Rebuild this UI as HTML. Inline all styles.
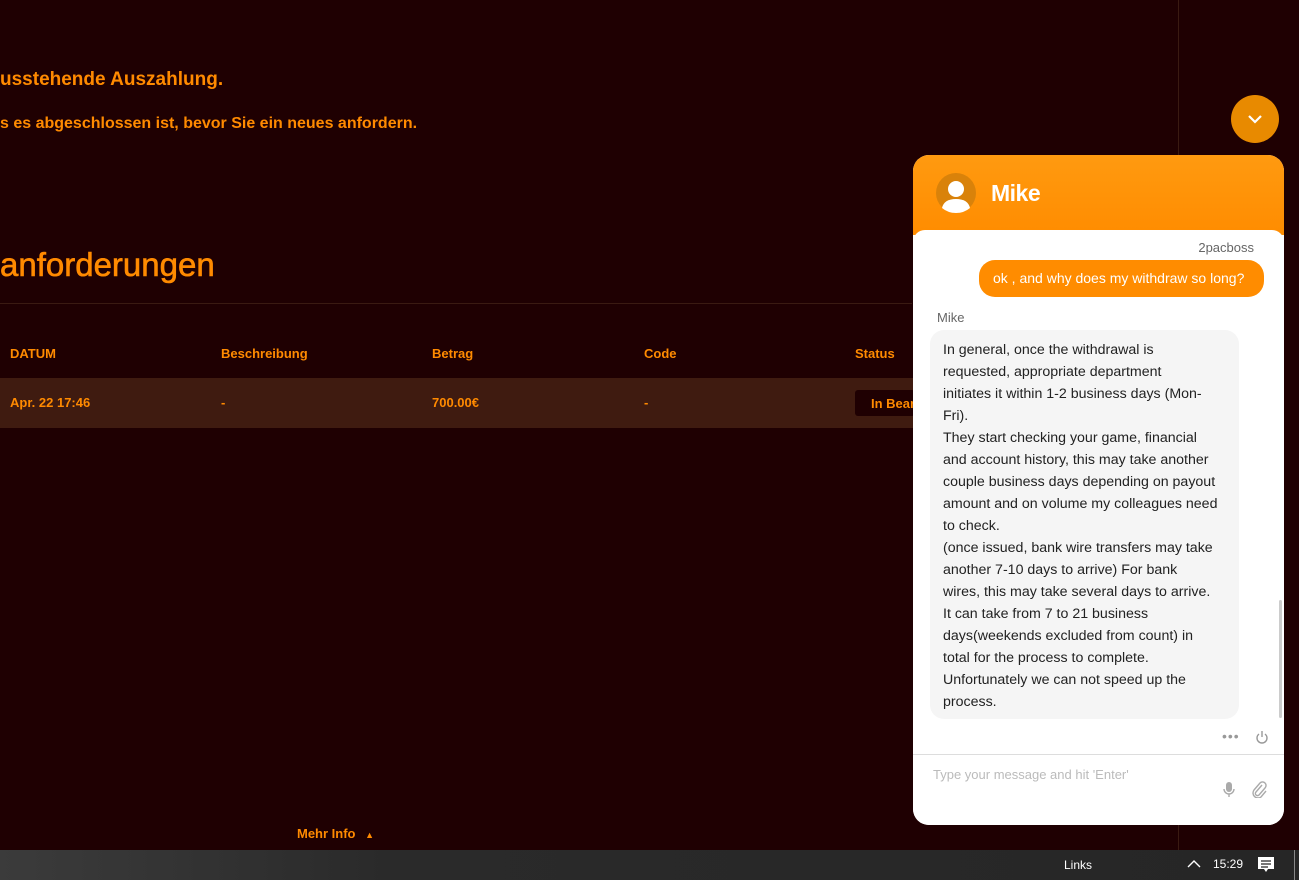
<!DOCTYPE html>
<html><head><style>
*{margin:0;padding:0;box-sizing:border-box}
body{width:1299px;height:880px;background:#1f0002;position:relative;overflow:hidden;font-family:"Liberation Sans",sans-serif}
.o{color:#ff8a00;font-weight:bold;position:absolute;white-space:nowrap}
.vline{position:absolute;left:1178px;top:0;width:1px;height:850px;background:#3a1a12}
.hline{position:absolute;left:0;top:303px;width:912px;height:1px;background:#3a1a12}
.row{position:absolute;left:0;top:378px;width:913px;height:50px;background:#3f1b10}
.badge{position:absolute;left:855px;top:390px;width:60px;height:26px;background:#1f0002;border-radius:3px;color:#ff8a00;font-weight:bold;font-size:13px;padding:6px 0 0 16px;white-space:nowrap;overflow:hidden}
.fab{position:absolute;left:1231px;top:95px;width:48px;height:48px;border-radius:50%;background:#e88a00}
.chat{position:absolute;left:913px;top:155px;width:371px;height:670px;border-radius:16px;background:#fff;overflow:hidden}
.head{height:80px;background:linear-gradient(#ff9a10,#ff8c00)}
.body{position:absolute;top:75px;left:0;right:0;bottom:0;background:#fff;border-radius:12px 12px 0 0}
.t{position:absolute;white-space:nowrap;font-size:14px}
.bubble{position:absolute;left:17px;top:175px;width:309px;height:389px;background:#f5f5f5;border-radius:14px;padding:9px 0 0 13px;font-size:14.2px;line-height:22px;color:#222}
.task{position:absolute;left:0;top:850px;width:1299px;height:30px;background:linear-gradient(90deg,#3b3b3b,#2a2a2a 30%,#262626)}
</style></head><body>
<div class="vline"></div>
<div class="o" style="left:0;top:69px;font-size:19px">usstehende Auszahlung.</div>
<div class="o" style="left:0;top:115px;font-size:16px">s es abgeschlossen ist, bevor Sie ein neues anfordern.</div>
<div class="o" style="left:0;top:246px;font-size:33px;font-weight:normal;-webkit-text-stroke:0.6px #ff8a00">anforderungen</div>
<div class="hline"></div>
<div class="o" style="left:10px;top:346px;font-size:13px">DATUM</div>
<div class="o" style="left:221px;top:346px;font-size:13px">Beschreibung</div>
<div class="o" style="left:432px;top:346px;font-size:13px">Betrag</div>
<div class="o" style="left:644px;top:346px;font-size:13px">Code</div>
<div class="o" style="left:855px;top:346px;font-size:13px">Status</div>
<div class="row"></div>
<div class="o" style="left:10px;top:395px;font-size:13px">Apr. 22 17:46</div>
<div class="o" style="left:221px;top:395px;font-size:13px">-</div>
<div class="o" style="left:432px;top:395px;font-size:13px">700.00€</div>
<div class="o" style="left:644px;top:395px;font-size:13px">-</div>
<div class="badge">In Bearbeitung</div>
<div class="o" style="left:297px;top:826px;font-size:13px">Mehr Info <span style="font-size:9px;margin-left:6px">▲</span></div>
<div class="fab"><svg width="48" height="48"><path d="M18 21l6 6 6-6" stroke="#fff" stroke-width="2.2" fill="none"/></svg></div>
<div class="chat">
 <div class="head">
  <svg style="position:absolute;left:23px;top:18px" width="40" height="40"><circle cx="20" cy="20" r="20" fill="#d9820a"/><circle cx="20" cy="16" r="8" fill="#fff"/><path d="M6 35q2-9 14-9t14 9q-6 5-14 5t-14-5z" fill="#fff"/></svg>
  <div class="t" style="left:78px;top:25px;color:#fff;font-size:23px;font-weight:bold;letter-spacing:-0.5px">Mike</div>
 </div>
 <div class="body">
  <div class="t" style="right:30px;top:10px;font-size:13px;color:#666">2pacboss</div>
  <div class="t" style="left:66px;top:30px;width:285px;height:37px;background:#ff8c00;border-radius:16px;color:#fff;padding:10px 0 0 14px">ok , and why does my withdraw so long?</div>
  <div class="t" style="left:24px;top:80px;font-size:13px;color:#666">Mike</div>
  <div class="bubble" style="top:100px">In general, once the withdrawal is<br>requested, appropriate department<br>initiates it within 1-2 business days (Mon-<br>Fri).<br>They start checking your game, financial<br>and account history, this may take another<br>couple business days depending on payout<br>amount and on volume my colleagues need<br>to check.<br>(once issued, bank wire transfers may take<br>another 7-10 days to arrive) For bank<br>wires, this may take several days to arrive.<br>It can take from 7 to 21 business<br>days(weekends excluded from count) in<br>total for the process to complete.<br>Unfortunately we can not speed up the<br>process.</div>
  <div style="position:absolute;left:366px;top:370px;width:3px;height:118px;background:#ccc;border-radius:2px"></div>
  <div class="t" style="left:309px;top:498px;color:#999;font-size:14px;letter-spacing:1px">•••</div>
  <svg style="position:absolute;left:342px;top:500px" width="14" height="14"><path d="M4 4a5 5 0 1 0 6 0M7 1v6" stroke="#999" stroke-width="1.4" fill="none"/></svg>
  <div style="position:absolute;left:0;right:0;top:524px;height:1px;background:#ddd"></div>
  <div class="t" style="left:20px;top:537px;font-size:13px;color:#bbb">Type your message and hit 'Enter'</div>
  <svg style="position:absolute;left:309px;top:551px" width="14" height="18"><rect x="4" y="1" width="6" height="10" rx="3" fill="#aaa"/><path d="M2 8a5 5 0 0 0 10 0M7 13v3" stroke="#aaa" stroke-width="1.4" fill="none"/></svg>
  <svg style="position:absolute;left:338px;top:550px" width="16" height="18"><path d="M11 5l-6 7a2 2 0 0 0 3 3l6-7a3.5 3.5 0 0 0-5-5l-6 7a5 5 0 0 0 7 7l5-6" stroke="#aaa" stroke-width="1.4" fill="none"/></svg>
 </div>
</div>
<div class="task">
 <div class="t" style="left:1064px;top:8px;color:#fff;font-size:12px">Links</div>
 <svg style="position:absolute;left:1187px;top:9px" width="14" height="10"><path d="M1 8l6-6 6 6" stroke="#fff" stroke-width="1.4" fill="none"/></svg>
 <div class="t" style="left:1213px;top:7px;color:#fff;font-size:12px">15:29</div>
 <svg style="position:absolute;left:1257px;top:6px" width="18" height="18"><path d="M1 1h16v12h-6l-2 3-2-3H1z" fill="#fff"/><path d="M4 5h10M4 8h10M4 11h7" stroke="#262626" stroke-width="1.2"/></svg>
 <div style="position:absolute;left:1294px;top:0;width:1px;height:30px;background:#888"></div>
</div>
</body></html>
